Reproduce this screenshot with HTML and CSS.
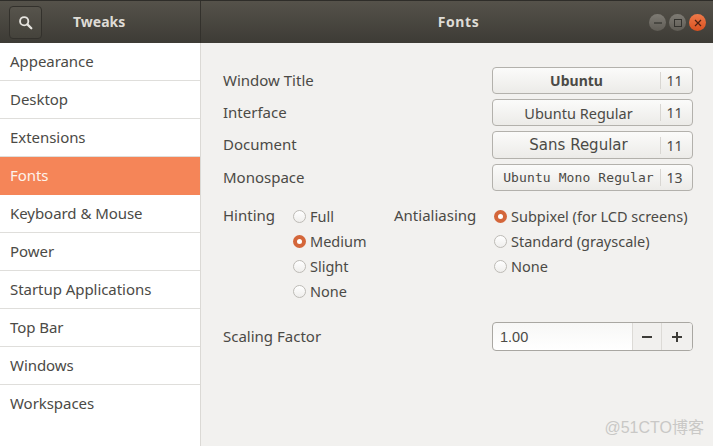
FILE: index.html
```html
<!DOCTYPE html>
<html lang="en">
<head>
    <meta charset="UTF-8">
    <meta name="viewport" content="width=device-width, initial-scale=1.0">
    <title>Tweaks</title>
    <link rel="stylesheet" href="styles.css">
</head>
<body>
    <div class="window">
        <header class="headerbar">
            <div class="header-left">
                <button class="search-button" aria-label="Search">
                    <svg width="15" height="15" viewBox="0 0 16 16">
                        <circle cx="6.6" cy="6.6" r="4.4" fill="none" stroke="#e6e4df" stroke-width="2"/>
                        <path d="M10 10l4.2 4.2" stroke="#e6e4df" stroke-width="2.4" stroke-linecap="round"/>
                    </svg>
                </button>
                <span class="app-title">Tweaks</span>
            </div>
            <div class="header-right">
                <span class="page-title">Fonts</span>
                <div class="window-controls">
                    <span class="control">
                        <svg width="10" height="10" viewBox="0 0 10 10"><path d="M1 5h8" stroke="#33322e" stroke-width="1.2"/></svg>
                    </span>
                    <span class="control">
                        <svg width="10" height="10" viewBox="0 0 10 10"><rect x="1.5" y="1.5" width="7" height="7" fill="none" stroke="#33322e" stroke-width="1"/></svg>
                    </span>
                    <span class="control close">
                        <svg width="10" height="10" viewBox="0 0 10 10"><path d="M2 2l6 6M8 2l-6 6" stroke="#4a2012" stroke-width="1.2"/></svg>
                    </span>
                </div>
            </div>
        </header>

        <div class="content">
            <nav class="sidebar">
                <div class="side-row">Appearance</div>
                <div class="side-row">Desktop</div>
                <div class="side-row">Extensions</div>
                <div class="side-row selected">Fonts</div>
                <div class="side-row">Keyboard &amp; Mouse</div>
                <div class="side-row">Power</div>
                <div class="side-row">Startup Applications</div>
                <div class="side-row">Top Bar</div>
                <div class="side-row">Windows</div>
                <div class="side-row">Workspaces</div>
            </nav>

            <main class="main">
                <div class="font-rows">
                    <span class="label">Window Title</span>
                    <button class="font-button"><span class="font-name bold">Ubuntu</span><span class="font-size">11</span></button>
                    <span class="label">Interface</span>
                    <button class="font-button"><span class="font-name regular">Ubuntu Regular</span><span class="font-size">11</span></button>
                    <span class="label">Document</span>
                    <button class="font-button tall"><span class="font-name sans">Sans Regular</span><span class="font-size">11</span></button>
                    <span class="label">Monospace</span>
                    <button class="font-button"><span class="font-name mono">Ubuntu Mono Regular</span><span class="font-size">13</span></button>
                </div>

                <div class="radio-section">
                    <span class="group-label">Hinting</span>
                    <div class="radio-list">
                        <div class="radio"><span class="dot"></span>Full</div>
                        <div class="radio"><span class="dot on"></span>Medium</div>
                        <div class="radio"><span class="dot"></span>Slight</div>
                        <div class="radio"><span class="dot"></span>None</div>
                    </div>
                    <span class="group-label">Antialiasing</span>
                    <div class="radio-list">
                        <div class="radio"><span class="dot on"></span>Subpixel (for LCD screens)</div>
                        <div class="radio"><span class="dot"></span>Standard (grayscale)</div>
                        <div class="radio"><span class="dot"></span>None</div>
                    </div>
                </div>

                <div class="scaling-row">
                    <span class="label">Scaling Factor</span>
                    <div class="spin">
                        <span class="spin-value">1.00</span>
                        <span class="spin-btn">
                            <svg width="10" height="10" viewBox="0 0 10 10"><path d="M0 5h10" stroke="#3d3c38" stroke-width="2"/></svg>
                        </span>
                        <span class="spin-btn">
                            <svg width="10" height="10" viewBox="0 0 10 10"><path d="M0 5h10M5 0v10" stroke="#3d3c38" stroke-width="2"/></svg>
                        </span>
                    </div>
                </div>
            </main>
        </div>

        <span class="watermark">@51CTO博客</span>
    </div>
</body>
</html>
```

FILE: styles.css
```css
* {
    box-sizing: border-box;
}

body {
    margin: 0;
    font-family: "Noto Sans", "Open Sans", sans-serif;
    font-size: 15px;
    color: #4b4a46;
}

.window {
    position: relative;
    width: 713px;
    height: 446px;
    overflow: hidden;
    background-color: #f2f1ef;
}

.headerbar {
    display: flex;
    height: 43px;
    background: linear-gradient(#55524a, #3d3b35);
    border-top: 1px solid #2e2d29;
    color: #dfdcd6;
    font-weight: 700;
    font-size: 14px;
}

.header-left {
    display: flex;
    align-items: center;
    width: 201px;
    padding-left: 9px;
    border-right: 1px solid #33312c;
}

.search-button {
    display: flex;
    align-items: center;
    justify-content: center;
    width: 33px;
    height: 33px;
    padding: 0;
    border: 1px solid #33312c;
    border-radius: 4px;
    background: linear-gradient(#57544c, #45433c);
}

.app-title {
    margin-left: 31px;
    padding-bottom: 1px;
}

.header-right {
    position: relative;
    flex: 1;
    display: flex;
    align-items: center;
    justify-content: center;
}

.page-title {
    margin-left: 3px;
    padding-bottom: 1px;
    letter-spacing: 0.6px;
}

.window-controls {
    position: absolute;
    right: 7px;
    top: 13px;
    display: flex;
    gap: 3px;
}

.control {
    display: flex;
    align-items: center;
    justify-content: center;
    width: 17px;
    height: 17px;
    border-radius: 50%;
    background: linear-gradient(#7e7b74, #5f5c55);
}

.control.close {
    background: linear-gradient(#ee7a4a, #d9501f);
}

.content {
    display: flex;
    height: 403px;
}

.sidebar {
    width: 201px;
    background-color: #fff;
    border-right: 1px solid #dbd9d5;
}

.side-row {
    display: flex;
    align-items: center;
    height: 38px;
    padding: 0 0 2px 10px;
    border-bottom: 1px solid #dfdedb;
    color: #4b4a46;
    letter-spacing: -0.05px;
}

.side-row:last-child {
    border-bottom: none;
}

.side-row.selected {
    background-color: #f58558;
    border-bottom-color: #f58558;
    color: #fdf3ec;
}

.main {
    flex: 1;
    padding: 24px 20px 0 22px;
}

.label {
    padding-bottom: 2px;
    line-height: 24px;
}

.group-label {
    line-height: 23px;
}

.font-rows {
    display: grid;
    grid-template-columns: 269px 201px;
    align-items: center;
    row-gap: 5px;
}

.font-button {
    display: flex;
    align-items: center;
    width: 201px;
    height: 27px;
    padding: 0;
    border: 1px solid #b3b1ac;
    border-radius: 4px;
    background: linear-gradient(#fbfbfa, #ecebe8);
    color: #4b4a46;
    font: inherit;
}

.font-button.tall {
    height: 28px;
}

.font-name {
    flex: 1;
    text-align: center;
    font-size: 15px;
}

.font-name.bold {
    font-weight: 700;
    font-size: 14px;
}

.font-name.regular {
    padding-left: 4px;
    font-size: 14.5px;
}

.font-name.sans {
    padding-left: 4px;
    font-family: "DejaVu Sans", sans-serif;
    font-size: 15px;
}

.font-name.mono {
    padding-left: 4px;
    font-family: "DejaVu Sans Mono", monospace;
    font-size: 13px;
    white-space: nowrap;
    letter-spacing: 0.1px;
}

.font-size {
    width: 32px;
    height: 17px;
    padding-right: 4px;
    line-height: 17px;
    border-left: 1px solid #d8d6d2;
    text-align: center;
    font-size: 14px;
}

.radio-section {
    display: grid;
    grid-template-columns: 70px 101px 100px 1fr;
    align-items: start;
    margin-top: 13px;
}

.radio {
    display: flex;
    align-items: center;
    height: 25px;
    padding-bottom: 2px;
    white-space: nowrap;
    font-size: 14.5px;
}

.dot {
    display: flex;
    align-items: center;
    justify-content: center;
    width: 13px;
    height: 13px;
    margin: 2px 4px 0 0;
    border: 1px solid #bdbbb6;
    border-radius: 50%;
    background: linear-gradient(#fff, #efeeec);
}

.dot.on {
    border: none;
    background: #d4663a;
}

.dot.on::after {
    content: "";
    width: 5px;
    height: 5px;
    border-radius: 50%;
    background-color: #fff;
}

.scaling-row {
    display: grid;
    grid-template-columns: 269px 201px;
    align-items: center;
    margin-top: 18px;
}

.spin {
    display: flex;
    height: 29px;
    border: 1px solid #a9a7a2;
    border-radius: 4px;
    overflow: hidden;
    background: linear-gradient(#f7f7f6, #fff);
}

.spin-value {
    flex: 1;
    padding-left: 7px;
    line-height: 28px;
    font-family: "Liberation Sans", sans-serif;
    font-size: 14.5px;
}

.spin-btn {
    display: flex;
    align-items: center;
    justify-content: center;
    width: 29px;
    border-left: 1px solid #dcdad6;
    background-color: #f1f0ee;
}

.spin-btn:last-child {
    width: 31px;
}

.watermark {
    position: absolute;
    right: 9px;
    bottom: 8px;
    font-family: "Liberation Sans", "Noto Sans CJK SC", sans-serif;
    font-size: 16px;
    color: #c9c8c6;
}
```
